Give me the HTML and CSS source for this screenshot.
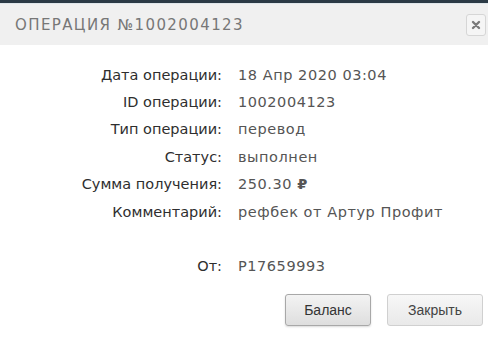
FILE: index.html
```html
<!DOCTYPE html>
<html lang="ru">

<head>
  <meta charset="UTF-8">
  <meta name="viewport" content="width=device-width, initial-scale=1.0">
  <title>Операция</title>
  <link rel="stylesheet" href="styles.css">
</head>

<body>
  <div class="topbar"></div>
  <div class="dialog">
    <div class="head">
      <span class="title">Операция №1002004123</span>
      <button class="close" title="Закрыть">
        <svg width="10" height="10" viewBox="0 0 10 10">
          <path d="M2 2 L8 8 M8 2 L2 8" stroke="#7a7a7a" stroke-width="2.4" stroke-linecap="round" />
        </svg>
      </button>
    </div>
    <div class="info">
      <div class="row"><span class="lbl">Дата операции:</span><span class="val">18 Апр 2020 03:04</span></div>
      <div class="row"><span class="lbl">ID операции:</span><span class="val">1002004123</span></div>
      <div class="row"><span class="lbl">Тип операции:</span><span class="val">перевод</span></div>
      <div class="row"><span class="lbl">Статус:</span><span class="val">выполнен</span></div>
      <div class="row"><span class="lbl">Сумма получения:</span><span class="val">250.30 <b>₽</b></span></div>
      <div class="row"><span class="lbl">Комментарий:</span><span class="val">рефбек от Артур Профит</span></div>
      <div class="row"><span class="lbl"></span><span class="val"></span></div>
      <div class="row"><span class="lbl">От:</span><span class="val">P17659993</span></div>
    </div>
    <div class="buttons">
      <button class="btn btn-active">Баланс</button>
      <button class="btn">Закрыть</button>
    </div>
  </div>
</body>

</html>
```

FILE: styles.css
```css
* {
  box-sizing: border-box;
}

html,
body {
  width: 100%;
  height: 100%;
  margin: 0;
}

body {
  font-family: "DejaVu Sans", sans-serif;
  background: #fff;
  overflow: hidden;
}

.topbar {
  height: 3px;
  background: #2b3a45;
  border-bottom: 1px solid #dfe6ea;
  box-sizing: content-box;
}

.head {
  display: flex;
  align-items: center;
  justify-content: space-between;
  height: 41px;
  padding: 0 2px 0 15px;
  background: #f0f0f0;
}

.title {
  font-size: 15px;
  letter-spacing: 1.4px;
  text-transform: uppercase;
  color: #777;
}

.close {
  width: 20px;
  height: 22px;
  padding: 0;
  display: flex;
  align-items: center;
  justify-content: center;
  background: #f5f5f5;
  border: 1px solid #d6d6d6;
  border-radius: 3px;
}

.info {
  padding-top: 16px;
  font-size: 14.5px;
  color: #444;
}

.row {
  display: flex;
  height: 27.4px;
  align-items: center;
}

.lbl {
  width: 222px;
  text-align: right;
  color: #2e2e2e;
}

.val {
  padding-left: 16px;
  letter-spacing: 0.55px;
  color: #555;
}

.val b {
  font-weight: bold;
}

.buttons {
  display: flex;
  justify-content: flex-end;
  gap: 16px;
  padding: 14px 5px 0 0;
}

.btn {
  height: 32px;
  padding: 0 14px;
  font-family: "Liberation Sans", Arial, sans-serif;
  font-size: 14px;
  color: #333;
  background: linear-gradient(#f7f7f7, #e9e9e9);
  border: 1px solid #d0d0d0;
  border-radius: 3px;
}

.btn-active {
  width: 86px;
  background: linear-gradient(#f3f3f3, #dedede);
  border-color: #a8a8a8;
  box-shadow: 0 1px 2px rgba(0, 0, 0, 0.15);
}

.btn:last-child {
  width: 96px;
  color: #444;
}
```
